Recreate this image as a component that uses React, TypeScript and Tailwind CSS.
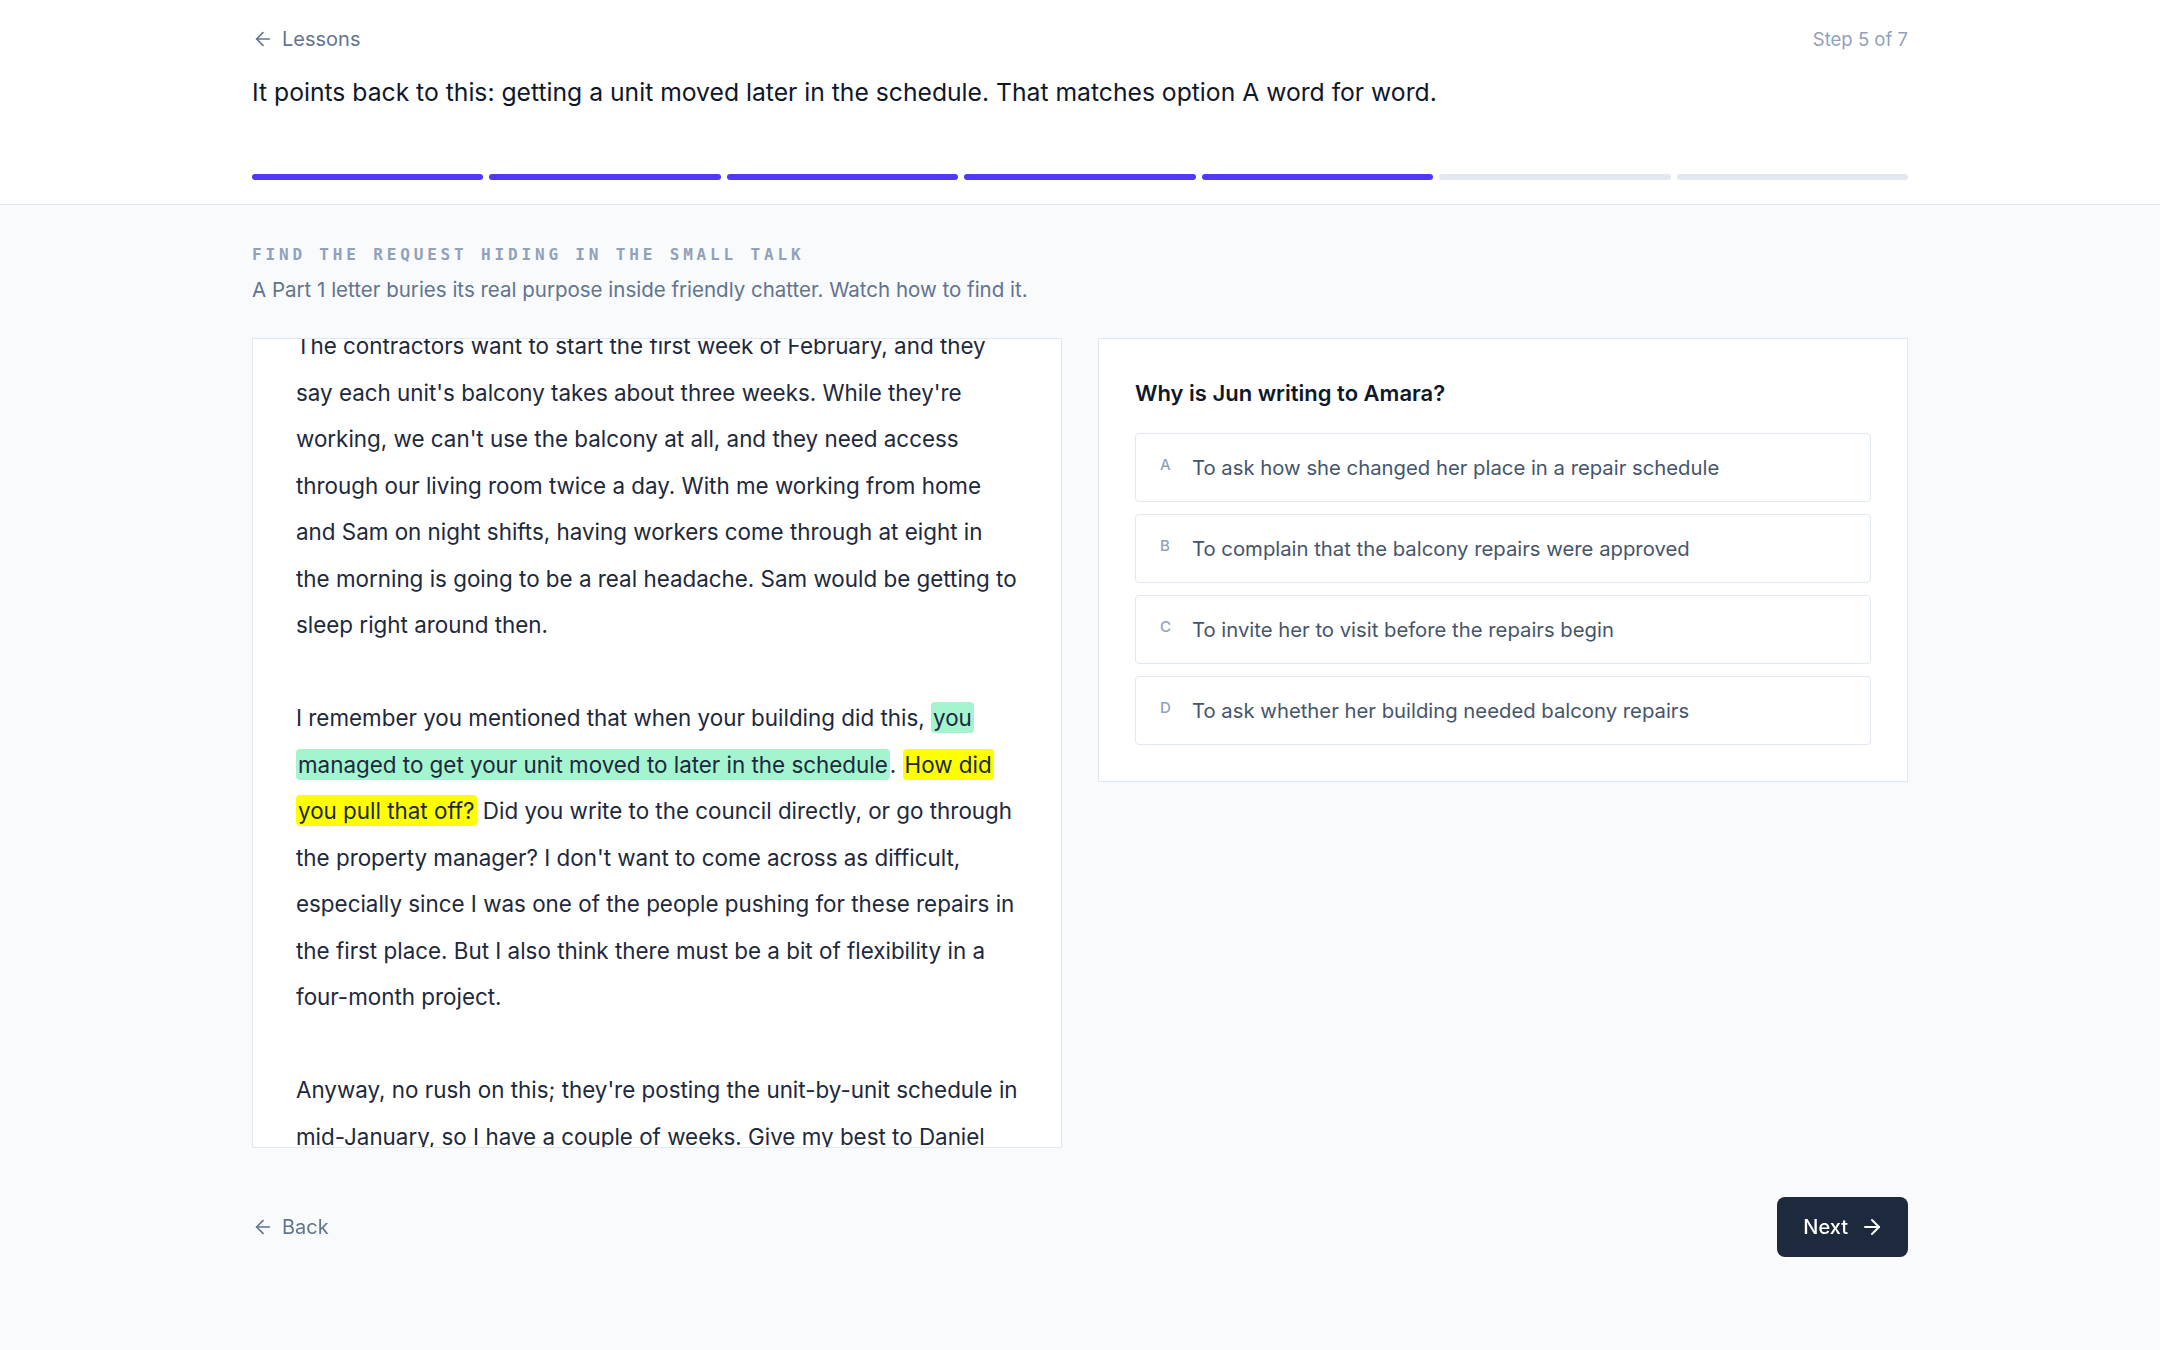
import React, { useEffect, useRef } from 'react';
import { ArrowLeft, ArrowRight } from 'lucide-react';

const TOTAL_STEPS = 7;
const CURRENT_STEP = 5;

const options = [
  { key: 'A', text: 'To ask how she changed her place in a repair schedule' },
  { key: 'B', text: 'To complain that the balcony repairs were approved' },
  { key: 'C', text: 'To invite her to visit before the repairs begin' },
  { key: 'D', text: 'To ask whether her building needed balcony repairs' },
];

const ProgressBar: React.FC<{ step: number; total: number }> = ({ step, total }) => (
  <div className="grid grid-cols-7 gap-1.5">
    {Array.from({ length: total }).map((_, i) => (
      <div
        key={i}
        className={`h-1.5 rounded-full ${i < step ? 'bg-indigo-600' : 'bg-slate-200'}`}
      />
    ))}
  </div>
);

const Letter: React.FC = () => {
  const scrollRef = useRef<HTMLDivElement>(null);

  useEffect(() => {
    if (scrollRef.current) scrollRef.current.scrollTop = 56;
  }, []);

  return (
    <div
      ref={scrollRef}
      className="h-[810px] overflow-y-auto border border-slate-200 bg-white [scrollbar-width:none]"
    >
      <div className="space-y-[46.5px] pt-10 pr-[41px] pb-10 pl-[43px] text-[22.4px] leading-[46.5px] text-slate-800">
        <p>
          The contractors want to start the first week of February, and they say each unit's balcony
          takes about three weeks. While they're working, we can't use the balcony at all, and they
          need access through our living room twice a day. With me working from home and Sam on
          night shifts, having workers come through at eight in the morning is going to be a real
          headache. Sam would be getting to sleep right around then.
        </p>
        <p>
          I remember you mentioned that when your building did this,{' '}
          <span className="rounded-sm bg-emerald-200 px-0.5 py-[2px] [box-decoration-break:clone]">
            you managed to get your unit moved to later in the schedule
          </span>
          .{' '}
          <span className="rounded-sm bg-[#ffff00] px-0.5 py-[2px] [box-decoration-break:clone]">
            How did you pull that off?
          </span>{' '}
          Did you write to the council directly, or go through the property manager? I don't want
          to come across as difficult, especially since I was one of the people pushing for these
          repairs in the first place. But I also think there must be a bit of flexibility in a
          four-month project.
        </p>
        <p>
          Anyway, no rush on this; they're posting the unit-by-unit schedule in mid-January, so I
          have a couple of weeks. Give my best to Daniel and the kids.
        </p>
        <p>Jun</p>
      </div>
    </div>
  );
};

const Question: React.FC = () => (
  <div className="self-start border border-slate-200 bg-white p-9">
    <h2 className="text-[22px] leading-9 font-semibold text-slate-900">Why is Jun writing to Amara?</h2>
    <div className="mt-[22px] flex flex-col gap-3">
      {options.map((opt) => (
        <button
          key={opt.key}
          className="flex items-start gap-[14px] rounded-sm border border-slate-200 bg-white px-6 py-5 text-left"
        >
          <span className="mt-px w-[18px] text-[15px] leading-5 font-medium text-slate-400">
            {opt.key}
          </span>
          <span className="text-[20.3px] leading-[27px] text-slate-600">{opt.text}</span>
        </button>
      ))}
    </div>
  </div>
);

export default function App() {
  return (
    <div className="min-h-screen bg-slate-50 font-['Inter',sans-serif]">
      {/* Header */}
      <header className="border-b border-slate-200 bg-white">
        <div className="mx-auto max-w-[1656px] pt-[25px] pb-6">
          <div className="flex items-center justify-between">
            <button className="flex items-center gap-2 text-xl leading-7 text-slate-500">
              <ArrowLeft size={22} strokeWidth={1.75} />
              Lessons
            </button>
            <span className="text-[18.5px] leading-7 text-slate-400">
              Step {CURRENT_STEP} of {TOTAL_STEPS}
            </span>
          </div>
          <h1 className="mt-[23px] text-[24.7px] leading-8 text-slate-900">
            It points back to this: getting a unit moved later in the schedule. That matches option A
            word for word.
          </h1>
          <div className="mt-[66px]">
            <ProgressBar step={CURRENT_STEP} total={TOTAL_STEPS} />
          </div>
        </div>
      </header>

      {/* Lesson body */}
      <main className="mx-auto max-w-[1656px] pt-10 pb-16">
        <div className="font-['DejaVu_Sans_Mono',monospace] text-base leading-5 font-semibold tracking-[0.24em] text-slate-400 uppercase">
          Find the request hiding in the small talk
        </div>
        <p className="mt-[11px] text-[20.5px] leading-7 text-slate-500">
          A Part 1 letter buries its real purpose inside friendly chatter. Watch how to find it.
        </p>

        <div className="mt-[34px] grid grid-cols-2 gap-9">
          <Letter />
          <Question />
        </div>

        {/* Navigation */}
        <div className="mt-[49px] flex items-center justify-between">
          <button className="flex items-center gap-2 text-xl leading-7 text-slate-500">
            <ArrowLeft size={22} strokeWidth={1.75} />
            Back
          </button>
          <button className="flex items-center gap-3 rounded-lg bg-slate-800 py-4 pr-6 pl-[26px] text-xl leading-7 font-medium text-white">
            Next
            <ArrowRight size={24} strokeWidth={2} />
          </button>
        </div>
      </main>
    </div>
  );
}
